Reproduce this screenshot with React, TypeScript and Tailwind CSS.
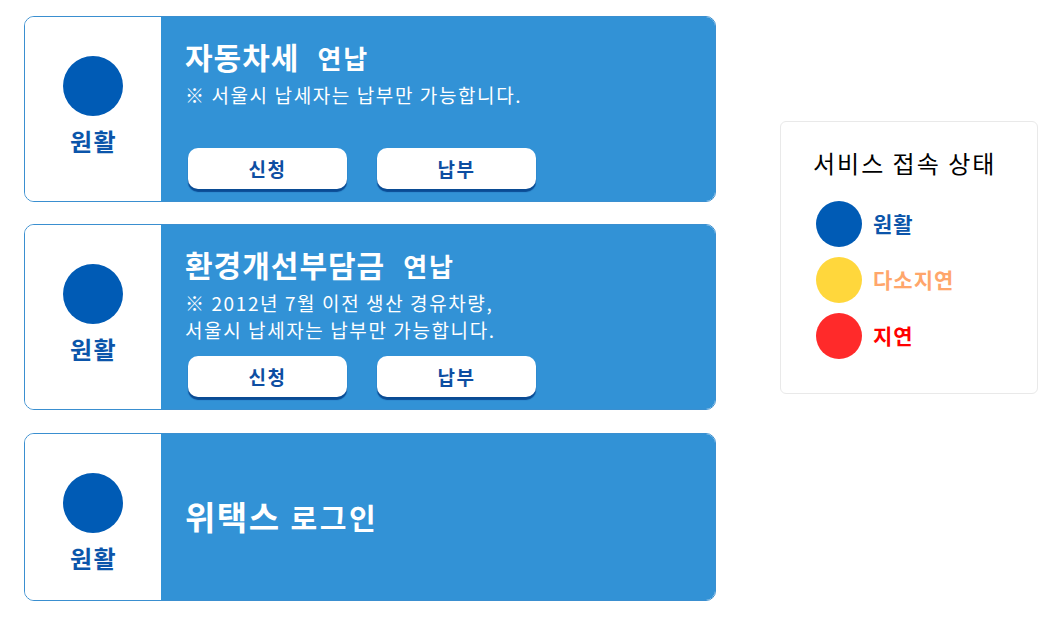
import React from "react";

const font = { fontFamily: '"Noto Sans CJK KR", "Noto Sans", sans-serif' };

function Status() {
  return (
    <div className="w-[136px] shrink-0 bg-white flex flex-col items-center pt-[39px]">
      <div className="w-[60px] h-[60px] rounded-full bg-[#005bb5]" />
      <div className="mt-[10px] text-[24px] leading-[30px] tracking-[1.5px] font-bold text-[#0b55aa] pl-[1px]">원활</div>
    </div>
  );
}

function Btn({ label }: { label: string }) {
  return (
    <button className="w-[159px] h-[41px] rounded-[10px] bg-white shadow-[0_3px_1px_#0a4b94] text-[19px] tracking-[1.5px] font-bold text-[#0d4ea2] leading-none">
      {label}
    </button>
  );
}

function Card({
  title,
  sub,
  lines,
  buttons,
  className = "",
}: {
  title: string;
  sub: string;
  lines?: string[];
  buttons: boolean;
  className?: string;
}) {
  return (
    <div
      className={`flex ${buttons ? "h-[186px]" : "h-[168px]"} rounded-[10px] border border-[#3a8fd0] overflow-hidden ${className}`}
    >
      <Status />
      <div
        className={`flex-1 bg-[#3292d6] pl-[24px] flex flex-col ${buttons ? "pt-[21px]" : "justify-center pb-[2px]"}`}
      >
        {buttons ? (
          <div className="text-white font-bold leading-[36px] whitespace-nowrap flex items-baseline">
            <span className="text-[30px] tracking-[1px]">{title}</span>
            <span className="text-[26px] tracking-[2px] ml-[18px]">{sub}</span>
          </div>
        ) : (
          <div className="text-white font-bold leading-[40px] whitespace-nowrap flex items-baseline">
            <span className="text-[33px] tracking-[1.5px]">{title}</span>
            <span className="text-[29px] tracking-[2.5px] ml-[10px]">{sub}</span>
          </div>
        )}
        {lines && (
          <div className="mt-[5px] h-[54px] text-white text-[19px] leading-[27px] tracking-[1.6px]">
            {lines.map((l) => (
              <div key={l}>{l}</div>
            ))}
          </div>
        )}
        {buttons && (
          <div className="mt-[13px] flex gap-[30px] pl-[3px]">
            <Btn label="신청" />
            <Btn label="납부" />
          </div>
        )}
      </div>
    </div>
  );
}

function LegendItem({ color, text, textColor }: { color: string; text: string; textColor: string }) {
  return (
    <div className="flex items-center gap-[11px]">
      <div className={`w-[46px] h-[46px] rounded-full ${color}`} />
      <div className={`text-[21px] tracking-[1px] font-bold ${textColor}`}>{text}</div>
    </div>
  );
}

export default function App() {
  return (
    <div className="min-h-[618px] w-[1062px] bg-white flex pt-[16px] pl-[24px]" style={font}>
      <div className="w-[692px] flex flex-col">
        <Card title="자동차세" sub="연납" lines={["※ 서울시 납세자는 납부만 가능합니다."]} buttons />
        <Card
          className="mt-[22px]"
          title="환경개선부담금"
          sub="연납"
          lines={["※ 2012년 7월 이전 생산 경유차량,", "서울시 납세자는 납부만 가능합니다."]}
          buttons
        />
        <Card className="mt-[23px]" title="위택스" sub="로그인" buttons={false} />
      </div>
      <div className="ml-[64px] mt-[105px] w-[258px] h-[273px] rounded-[6px] border border-[#e9e9e9] pl-[32px] pt-[25px]">
        <div className="text-[24px] leading-[32px] tracking-[2px] text-black">서비스 접속 상태</div>
        <div className="mt-[22px] pl-[3px] flex flex-col gap-[10px]">
          <LegendItem color="bg-[#005bb5]" text="원활" textColor="text-[#0b55aa]" />
          <LegendItem color="bg-[#ffd73c]" text="다소지연" textColor="text-[#ffa66b]" />
          <LegendItem color="bg-[#ff2a2a]" text="지연" textColor="text-[#ff0000]" />
        </div>
      </div>
    </div>
  );
}
